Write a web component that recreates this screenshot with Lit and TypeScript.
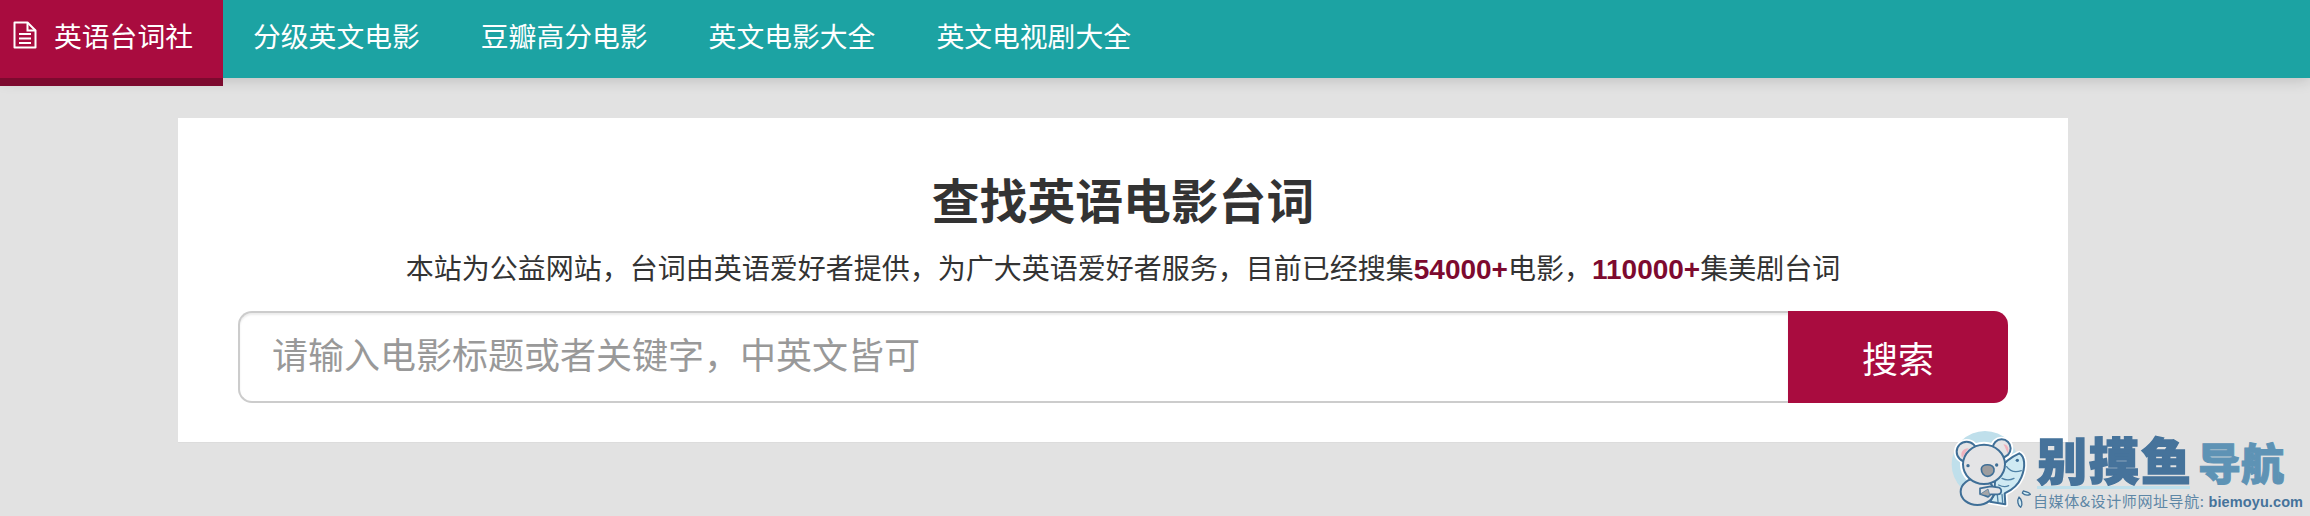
import { LitElement, html, css } from 'lit';
import { customElement } from 'lit/decorators.js';

const NAV_LINKS = ['分级英文电影', '豆瓣高分电影', '英文电影大全', '英文电视剧大全'];

@customElement('biemoyu-mark')
export class BiemoyuMark extends LitElement {
  static styles = css`
    :host {
      position: absolute;
      left: 1940px;
      top: 425px;
      width: 370px;
      height: 91px;
      display: block;
      pointer-events: none;
      font-family: 'Noto Sans CJK SC', sans-serif;
    }
    svg { position: absolute; left: 0; top: 0; }
    .name {
      position: absolute;
      left: 97px;
      top: 3px;
      font-size: 50px;
      line-height: 60px;
      font-weight: 900;
      letter-spacing: 2px;
      color: #46739b;
      -webkit-text-stroke: 1.5px #46739b;
      white-space: nowrap;
    }
    .guide {
      position: absolute;
      left: 258px;
      top: 11px;
      font-size: 43px;
      line-height: 50px;
      font-weight: 900;
      color: #5e93b5;
      -webkit-text-stroke: 1px #5e93b5;
      white-space: nowrap;
    }
    .rule {
      position: absolute;
      left: 97px;
      top: 61px;
      width: 153px;
      height: 3px;
      background: #bfe0ec;
    }
    .tag {
      position: absolute;
      left: 93px;
      top: 66px;
      font-size: 15px;
      line-height: 20px;
      letter-spacing: 0.6px;
      color: #5e87a6;
      white-space: nowrap;
    }
    .tag b {
      font-family: 'Liberation Sans', sans-serif;
      font-size: 14.5px;
      letter-spacing: 0.1px;
      color: #46739b;
    }
  `;

  render() {
    return html`
      <svg width="130" height="91" viewBox="0 0 390 273" fill="none" stroke-linejoin="round" stroke-linecap="round">
        <circle cx="135" cy="118" r="100" fill="#bfdfeb" />
        <g stroke="#fff" stroke-width="16">
          <circle cx="80" cy="80" r="30" />
          <circle cx="185" cy="70" r="27" />
          <ellipse cx="132" cy="118" rx="64" ry="60" />
          <path d="M238 85c16 8 20 38 6 72-9 22-28 38-50 48l2 33-46-8 18-30c-8-22-2-48 12-68 14-22 38-38 58-47z" />
        </g>
        <path d="M238 85c16 8 20 38 6 72-9 22-28 38-50 48l2 33-46-8 18-30c-8-22-2-48 12-68 14-22 38-38 58-47z"
          fill="#cfeaf3" stroke="#3f6f97" stroke-width="6" />
        <path d="M200 125c10 14 26 18 44 12M186 160c12 6 24 6 36 0M176 180c12 6 22 6 30 2M172 210l2 20M186 208l2 24"
          stroke="#4f82a6" stroke-width="4" />
        <circle cx="232" cy="106" r="5" fill="#3f6f97" />
        <ellipse cx="112" cy="200" rx="50" ry="40" fill="#e4e4e6" stroke="#3f6f97" stroke-width="6" />
        <circle cx="80" cy="80" r="30" fill="#e4e4e6" stroke="#3f6f97" stroke-width="6" />
        <circle cx="185" cy="70" r="27" fill="#e4e4e6" stroke="#3f6f97" stroke-width="6" />
        <path d="M66 98c-6-14 2-28 20-28-8 8-12 20-20 28z" fill="#efb2bd" />
        <path d="M190 58c14 0 18 14 14 28-6-10-8-20-14-28z" fill="#efb2bd" />
        <ellipse cx="132" cy="118" rx="63" ry="59" fill="#e4e4e6" stroke="#3f6f97" stroke-width="6" />
        <circle cx="84" cy="122" r="5" fill="#3f6f97" />
        <circle cx="170" cy="120" r="5" fill="#3f6f97" />
        <path d="M124 132c0-16 34-18 38 0 2 12-8 22-19 22s-19-10-19-22z" fill="#9d9d9f" stroke="#3f6f97" stroke-width="5" />
        <path d="M120 190l32-6 26 4c10 6 6 20-4 20h-22l-8 8-24-10z" fill="#e4e4e6" stroke="#3f6f97" stroke-width="5" />
        <path d="M120 208l24-16 6 20z" fill="#a5a5a7" stroke="#3f6f97" stroke-width="2" />
        <path d="M250 198c8 2 18 4 21 10-8 4-18 2-24-4zM237 216c7 6 13 22 5 31-8-6-12-20-5-31z"
          fill="#d3ecf4" stroke="#3f6f97" stroke-width="4" />
      </svg>
      <div class="name">别摸鱼</div>
      <div class="guide">导航</div>
      <div class="rule"></div>
      <div class="tag">自媒体&设计师网址导航: <b>biemoyu.com</b></div>
    `;
  }
}

@customElement('app-root')
export class AppRoot extends LitElement {
  static styles = css`
    :host {
      display: block;
      position: relative;
      width: 2310px;
      height: 516px;
      overflow: hidden;
      background: #e2e2e2;
      font-family: 'Liberation Sans', 'Noto Sans CJK SC', sans-serif;
    }
    .nav {
      display: flex;
      height: 78px;
      background: #1ca3a3;
      box-shadow: 0 2px 14px rgba(0, 0, 0, 0.16);
    }
    .brand {
      display: flex;
      align-items: center;
      gap: 17px;
      box-sizing: border-box;
      width: 223px;
      height: 86px;
      padding: 0 0 8px 13px;
      background: #a90c3f;
      border-bottom: 8px solid #7d0a2f;
      color: #fff;
      font-size: 27.8px;
    }
    .brand svg { flex: none; }
    .links {
      display: flex;
      align-items: center;
      gap: 61px;
      box-sizing: border-box;
      padding: 0 0 8px 30px;
      height: 78px;
      color: #fff;
      font-size: 27.8px;
    }
    .card {
      box-sizing: border-box;
      width: 1890px;
      height: 325px;
      margin: 40px 0 0 178px;
      padding: 52px 60px 0;
      background: #fff;
      text-align: center;
      border-bottom: 1px solid #dcdcdc;
    }
    h1 {
      margin: 0;
      font-size: 47.8px;
      line-height: 66px;
      font-weight: 700;
      color: #333;
    }
    .lead {
      margin: 14px 0 0;
      font-size: 28px;
      line-height: 40px;
      color: #333;
    }
    .lead b { color: #7d0a2f; }
    .search {
      display: flex;
      height: 92px;
      margin-top: 21px;
    }
    .field {
      flex: 1;
      box-sizing: border-box;
      padding: 0 32px;
      border: 2px solid #ccc;
      border-right: none;
      border-radius: 14px 0 0 14px;
      box-shadow: inset 0 2px 2px rgba(0, 0, 0, 0.075);
      font: inherit;
      font-size: 36px;
      color: #333;
      outline: none;
    }
    .field::placeholder { color: #999; opacity: 1; }
    .go {
      width: 220px;
      border: none;
      border-radius: 0 14px 14px 0;
      background: #a90c3f;
      color: #fff;
      font: inherit;
      font-size: 36px;
    }
  `;

  render() {
    return html`
      <div class="nav">
        <div class="brand">
          <svg width="24" height="28" viewBox="0 0 24 28" fill="none" stroke="#fff" stroke-width="2">
            <path d="M1.5 1.5h13l8 8v17h-21z" stroke-linejoin="round" />
            <path d="M14.5 1.5v8h8" />
            <path d="M6 13h12M6 17.5h12M6 22h12" />
          </svg>
          <span>英语台词社</span>
        </div>
        <div class="links">${NAV_LINKS.map((l) => html`<span>${l}</span>`)}</div>
      </div>
      <div class="card">
        <h1>查找英语电影台词</h1>
        <p class="lead">本站为公益网站，台词由英语爱好者提供，为广大英语爱好者服务，目前已经搜集<b>54000+</b>电影，<b>110000+</b>集美剧台词</p>
        <div class="search">
          <input class="field" placeholder="请输入电影标题或者关键字，中英文皆可" />
          <button class="go">搜索</button>
        </div>
      </div>
      <biemoyu-mark></biemoyu-mark>
    `;
  }
}
